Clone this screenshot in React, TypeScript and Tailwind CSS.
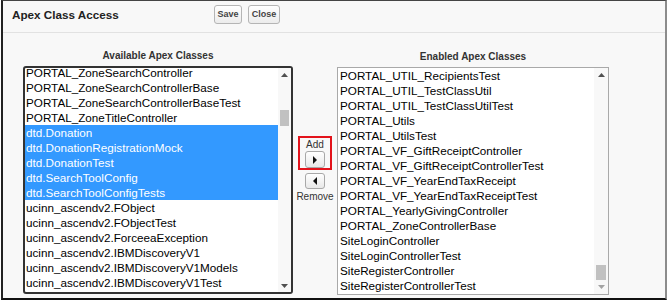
import React from 'react';

const available = [
  'PORTAL_ZoneSearchController',
  'PORTAL_ZoneSearchControllerBase',
  'PORTAL_ZoneSearchControllerBaseTest',
  'PORTAL_ZoneTitleController',
  'dtd.Donation',
  'dtd.DonationRegistrationMock',
  'dtd.DonationTest',
  'dtd.SearchToolConfig',
  'dtd.SearchToolConfigTests',
  'ucinn_ascendv2.FObject',
  'ucinn_ascendv2.FObjectTest',
  'ucinn_ascendv2.ForceeaException',
  'ucinn_ascendv2.IBMDiscoveryV1',
  'ucinn_ascendv2.IBMDiscoveryV1Models',
  'ucinn_ascendv2.IBMDiscoveryV1Test',
];

const enabled = [
  'PORTAL_UTIL_RecipientsTest',
  'PORTAL_UTIL_TestClassUtil',
  'PORTAL_UTIL_TestClassUtilTest',
  'PORTAL_Utils',
  'PORTAL_UtilsTest',
  'PORTAL_VF_GiftReceiptController',
  'PORTAL_VF_GiftReceiptControllerTest',
  'PORTAL_VF_YearEndTaxReceipt',
  'PORTAL_VF_YearEndTaxReceiptTest',
  'PORTAL_YearlyGivingController',
  'PORTAL_ZoneControllerBase',
  'SiteLoginController',
  'SiteLoginControllerTest',
  'SiteRegisterController',
  'SiteRegisterControllerTest',
];

const selected = new Set(['dtd.Donation', 'dtd.DonationRegistrationMock', 'dtd.DonationTest', 'dtd.SearchToolConfig', 'dtd.SearchToolConfigTests']);

const Arrow = ({ dir, color }: { dir: 'up' | 'down' | 'left' | 'right'; color: string }) => {
  const pts = {
    up: '0,4 3.5,0 7,4',
    down: '0,0 7,0 3.5,4',
    left: '4,0 4,8 0,4',
    right: '0,0 4,4 0,8',
  }[dir];
  const w = dir === 'up' || dir === 'down' ? 7 : 4;
  const h = dir === 'up' || dir === 'down' ? 4 : 8;
  return (
    <svg width={w} height={h} viewBox={`0 0 ${w} ${h}`}>
      <polygon points={pts} fill={color} />
    </svg>
  );
};

const App = () => {
  return (
    <div className="w-[670px] h-[304px] bg-white font-['Liberation_Sans',Arial,sans-serif]">
      <div className="ml-px w-[666px] h-[300px] border-t border-l-2 border-r-2 border-b-2 border-t-[#444] border-l-[#222] border-r-[#8c8c8c] border-b-[#111] bg-[#f8f8f8] flex flex-col">
        {/* Header */}
        <div className="h-[32px] border-b border-[#e2e2e2] flex items-start pt-[4px] pl-[9px]">
          <div className="w-[202px] text-[11.7px] leading-[19px] font-bold text-[#222]">Apex Class Access</div>
          <div className="flex gap-[6px]">
            <button className="w-[28px] h-[19px] rounded-[3px] border border-[#b5b5b5] bg-gradient-to-b from-white to-[#ececec] text-[9px] font-bold text-[#444]">Save</button>
            <button className="w-[32px] h-[19px] rounded-[3px] border border-[#b5b5b5] bg-gradient-to-b from-white to-[#ececec] text-[9px] font-bold text-[#444]">Close</button>
          </div>
        </div>

        {/* Body */}
        <div className="flex items-start pl-[20px]">
          {/* Available */}
          <div className="w-[270px] pt-[17px] flex flex-col">
            <div className="text-center text-[10px] leading-[12px] font-bold text-[#333] mb-[4px]">Available Apex Classes</div>
            <div className="h-[228px] border-2 border-[#333] rounded-[3px] bg-white overflow-hidden flex">
              <div className="w-[253px] overflow-hidden">
                <div className="mt-[-3px]">
                  {available.map((c) => (
                    <div key={c} className={`h-[15px] leading-[15px] text-[11.7px] pl-[1px] whitespace-nowrap ${selected.has(c) ? 'bg-[#3399ff] text-white' : 'text-black'}`}>
                      {c}
                    </div>
                  ))}
                </div>
              </div>
              <div className="w-[13px] flex flex-col bg-[#f8f8f8]">
                <div className="h-[13px] flex items-center justify-center"><Arrow dir="up" color="#505050" /></div>
                <div className="flex-1 px-[2px]">
                  <div className="mt-[29px] h-[16px] bg-[#c1c1c1]" />
                </div>
                <div className="h-[13px] flex items-center justify-center"><Arrow dir="down" color="#505050" /></div>
              </div>
            </div>
          </div>

          {/* Middle */}
          <div className="w-[44px] pt-[103px] flex flex-col items-center">
            <div className="w-[34px] h-[34px] border-2 border-[#e3131b] flex flex-col items-center">
              <div className="mt-[1px] text-[10px] leading-[12px] text-[#333]">Add</div>
              <button className="w-[20px] h-[17px] rounded-[3px] border border-[#a8a8a8] bg-gradient-to-b from-white to-[#e8e8e8] flex items-center justify-center">
                <Arrow dir="right" color="#111" />
              </button>
            </div>
            <button className="mt-[3px] w-[20px] h-[16px] rounded-[3px] border border-[#a8a8a8] bg-gradient-to-b from-white to-[#e8e8e8] flex items-center justify-center">
              <Arrow dir="left" color="#111" />
            </button>
            <div className="mt-[2px] text-[10px] leading-[12px] text-[#333]">Remove</div>
          </div>

          {/* Enabled */}
          <div className="w-[272px] pt-[18px] flex flex-col">
            <div className="text-center text-[10px] leading-[12px] font-bold text-[#333] mb-[4px]">Enabled Apex Classes</div>
            <div className="h-[228px] border border-[#a9a9a9] bg-white overflow-hidden flex">
              <div className="w-[256px] overflow-hidden">
                {enabled.map((c) => (
                  <div key={c} className="h-[15px] leading-[15px] text-[11.7px] pl-[2px] whitespace-nowrap text-black">
                    {c}
                  </div>
                ))}
              </div>
              <div className="w-[14px] flex flex-col bg-[#f8f8f8]">
                <div className="h-[14px] flex items-center justify-center"><Arrow dir="up" color="#505050" /></div>
                <div className="flex-1 flex flex-col justify-end px-[2px]">
                  <div className="h-[15px] bg-[#c1c1c1]" />
                </div>
                <div className="h-[14px] flex items-center justify-center"><Arrow dir="down" color="#a3a3a3" /></div>
              </div>
            </div>
          </div>
        </div>
      </div>
    </div>
  );
};

export default App;
